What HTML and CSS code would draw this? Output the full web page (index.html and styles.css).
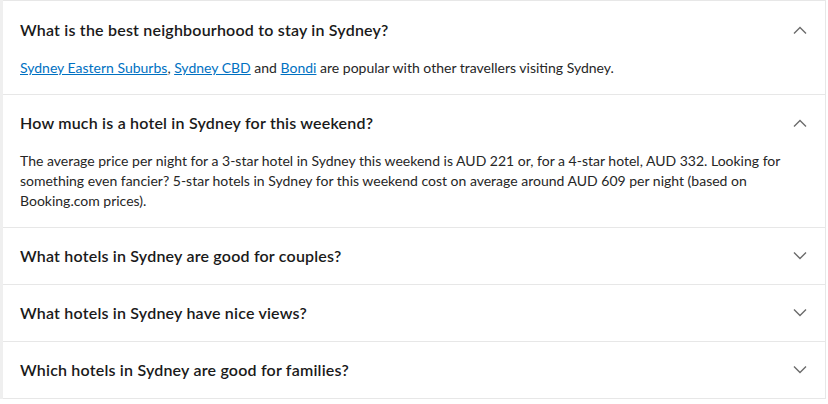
FILE: index.html
```html
<!DOCTYPE html>
<html lang="en">
<head>
    <meta charset="UTF-8">
    <title>FAQs about Sydney hotels</title>
    <link rel="stylesheet" href="styles.css">
</head>
<body>
<div class="faq">
    <details class="faq-item" open>
        <summary class="faq-title">
            <span>What is the best neighbourhood to stay in Sydney?</span>
            <svg class="chevron" width="14" height="8" viewBox="0 0 14 8"><path d="M1 7.5 L7 1.5 L13 7.5" /></svg>
        </summary>
        <div class="faq-answer">
            <a href="#">Sydney Eastern Suburbs</a>, <a href="#">Sydney CBD</a> and <a href="#">Bondi</a> are popular with other travellers visiting Sydney.
        </div>
    </details>

    <details class="faq-item" open>
        <summary class="faq-title">
            <span>How much is a hotel in Sydney for this weekend?</span>
            <svg class="chevron" width="14" height="8" viewBox="0 0 14 8"><path d="M1 7.5 L7 1.5 L13 7.5" /></svg>
        </summary>
        <div class="faq-answer">
            The average price per night for a 3-star hotel in Sydney this weekend is AUD 221 or, for a 4-star hotel, AUD 332. Looking for something even fancier? 5-star hotels in Sydney for this weekend cost on average around AUD 609 per night (based on Booking.com prices).
        </div>
    </details>

    <details class="faq-item">
        <summary class="faq-title">
            <span>What hotels in Sydney are good for couples?</span>
            <svg class="chevron" width="14" height="8" viewBox="0 0 14 8"><path d="M1 0.5 L7 6.5 L13 0.5" /></svg>
        </summary>
    </details>

    <details class="faq-item">
        <summary class="faq-title">
            <span>What hotels in Sydney have nice views?</span>
            <svg class="chevron" width="14" height="8" viewBox="0 0 14 8"><path d="M1 0.5 L7 6.5 L13 0.5" /></svg>
        </summary>
    </details>

    <details class="faq-item">
        <summary class="faq-title">
            <span>Which hotels in Sydney are good for families?</span>
            <svg class="chevron" width="14" height="8" viewBox="0 0 14 8"><path d="M1 0.5 L7 6.5 L13 0.5" /></svg>
        </summary>
    </details>
</div>
</body>
</html>
```

FILE: styles.css
```css
body {
    margin: 0;
    background: #fff;
    border-left: 3px solid #efefef;
    font-family: Lato, "Open Sans", sans-serif;
    color: #262626;
}
.faq {
    border-top: 1px solid #e7e7e7;
    border-right: 1px solid #e7e7e7;
    margin-right: 2px;
    padding-top: 1px;
}
.faq-item {
    border-bottom: 1px solid #e7e7e7;
    padding: 0 16px;
}
.faq-title {
    list-style: none;
    display: flex;
    justify-content: space-between;
    align-items: center;
    padding: 16px 0 16px 1px;
    font-size: 16px;
    line-height: 24px;
    font-weight: 600;
    letter-spacing: 0.2px;
    color: #1a1a1a;
    cursor: pointer;
}
.faq-title::-webkit-details-marker {
    display: none;
}
.chevron {
    margin-right: 2px;
}
.chevron path {
    fill: none;
    stroke: #6b6b6b;
    stroke-width: 1.4;
}
.faq-answer {
    padding: 0 0 16px 1px;
    font-size: 14px;
    line-height: 20px;
}
.faq-answer a {
    color: #0071c2;
}
```
